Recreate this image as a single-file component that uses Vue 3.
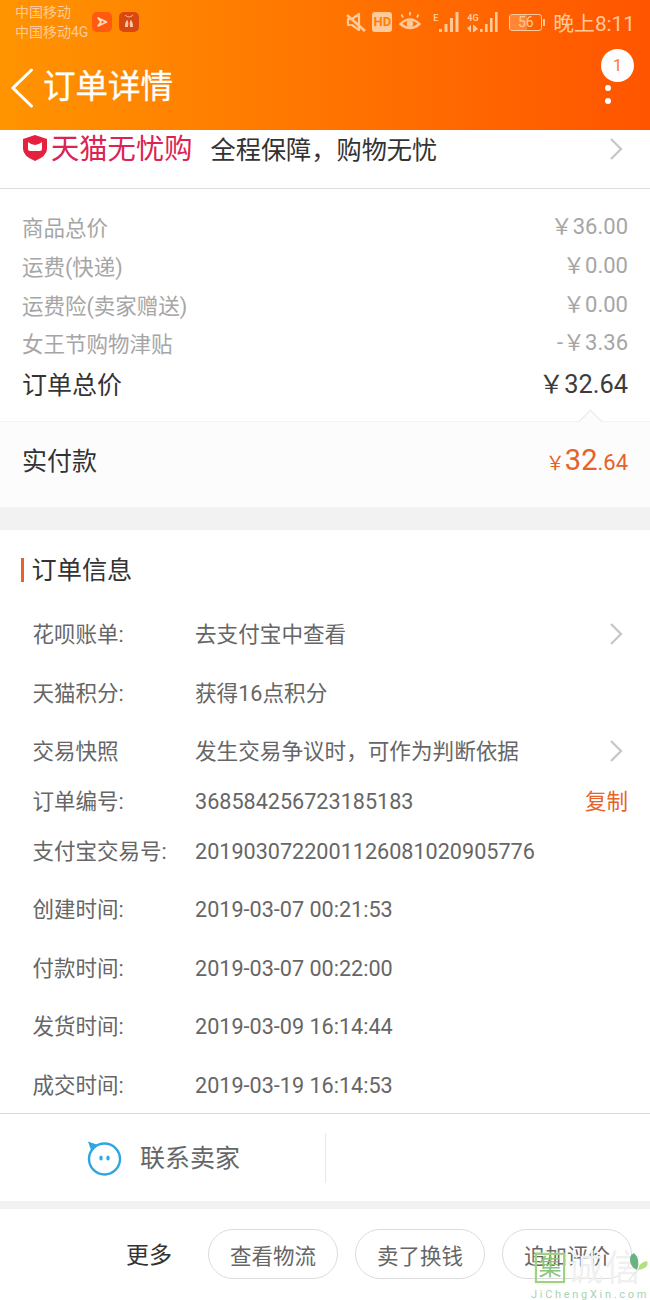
<template>
  <div class="page">
    <header class="top">
      <div class="status">
        <div class="carriers">
          <div>中国移动</div>
          <div>中国移动4G</div>
        </div>
        <span class="app-icon app-icon--play">
          <svg width="12" height="12" viewBox="0 0 12 12"><path d="M2 2 L10.5 6 L2 10 L5 6 Z" fill="none" stroke="#ffd9bd" stroke-width="1.6" stroke-linejoin="round" /></svg>
        </span>
        <span class="app-icon app-icon--tmall">
          <svg width="14" height="16" viewBox="0 0 14 16"><path d="M3 1 Q7 5 11 1" fill="none" stroke="#ffb48a" stroke-width="1" /><path d="M3 13 Q3 7 5.5 6 Q7 9 6 13 Z M11 13 Q11 7 8.5 6 Q7 9 8 13 Z" fill="#ffc9a8" /></svg>
        </span>
        <div class="status-right">
          <svg class="s-icon s-icon--mute" width="20" height="20" viewBox="0 0 20 20" fill="none" stroke="#ffc999" stroke-width="2.2">
            <path d="M2 7 H6 L13 2 V18 L6 13 H2 Z" stroke-linejoin="round" />
            <path d="M1 3 L19 19" stroke-width="2.6" />
          </svg>
          <span class="hd">HD</span>
          <svg class="s-icon s-icon--eye" width="22" height="20" viewBox="0 0 22 20" fill="none" stroke="#ffc999" stroke-width="2.3">
            <path d="M1.5 13 Q11 4 20.5 13 Q11 21 1.5 13 Z" />
            <circle cx="11" cy="12.8" r="3.2" fill="#ffc999" stroke="none" />
            <path d="M4 6.5 L2.5 3.5 M11 4.5 V1 M18 6.5 L19.5 3.5" stroke-width="1.8" />
          </svg>
          <div class="signal signal--e">
            <span class="signal__tag">E</span>
            <svg width="21" height="21" viewBox="0 0 21 21" fill="#ffc999">
              <rect x="0" y="17" width="3" height="3" /><rect x="5.5" y="12" width="3" height="8" /><rect x="11" y="6" width="3" height="14" /><rect x="16.5" y="0" width="3" height="20" />
            </svg>
          </div>
          <div class="signal signal--4g">
            <span class="signal__tag">4G</span>
            <svg width="32" height="21" viewBox="0 0 32 21" fill="#ffc999">
              <path d="M0 16 L4 13 V20 H3 Z M6 13 H7 L11 17 L7 20 H6 Z" />
              <rect x="13" y="17" width="2.6" height="3" /><rect x="18" y="12" width="2.6" height="8" /><rect x="23" y="6" width="2.6" height="14" /><rect x="28" y="0" width="2.6" height="20" />
            </svg>
          </div>
          <div class="battery"><span class="battery__body">56</span><span class="battery__cap" /></div>
          <span class="clock">晚上8:11</span>
        </div>
      </div>
      <div class="nav">
        <svg class="nav__back" width="23" height="40" viewBox="0 0 23 40" fill="none" stroke="#fff" stroke-width="3" stroke-linecap="round">
          <path d="M20.5 2 L2 20 L20.5 38" />
        </svg>
        <h1 class="nav__title">订单详情</h1>
        <div class="nav__more">
          <span class="nav__badge">1</span>
          <span class="nav__dot" />
          <span class="nav__dot" />
        </div>
      </div>
    </header>

    <section class="promise">
      <svg width="28" height="28" viewBox="0 0 28 28">
        <path d="M14 1 L26 5 V15 Q26 22 14 27 Q2 22 2 15 V5 Z" fill="#e5213f" />
        <path d="M7 8 H21 V15 Q21 17 19 17 H9 Q7 17 7 15 Z" fill="#fff" />
        <path d="M7 8 Q14 14 21 8 Z" fill="#e5213f" />
      </svg>
      <span class="promise__logo">天猫无忧购</span>
      <span class="promise__text">全程保障，购物无忧</span>
      <svg class="chevron chevron--promise" width="14" height="24" viewBox="0 0 14 24" fill="none" stroke="#c8c8c8" stroke-width="2.4"><path d="M2 2 L12 12 L2 22" /></svg>
    </section>

    <section class="prices">
      <div v-for="row in priceRows" :key="row.label" class="price-row">
        <span>{{ row.label }}</span>
        <span class="price-row__value">{{ row.value }}</span>
      </div>
      <div class="total-row">
        <span class="total-row__label">订单总价</span>
        <span class="total-row__value">￥32.64</span>
      </div>
    </section>

    <section class="paid">
      <span class="paid__notch" />
      <span class="paid__label">实付款</span>
      <span class="paid__value"><small class="paid__yen">￥</small><b>32</b><small>.64</small></span>
    </section>

    <section class="info">
      <h2 class="info__title">订单信息</h2>
      <div v-for="row in infoRows" :key="row.label" class="info-row" :style="{ height: row.h + 'px' }">
        <span class="info-row__label">{{ row.label }}</span>
        <span class="info-row__value">{{ row.value }}</span>
        <svg v-if="row.arrow" class="chevron" width="14" height="24" viewBox="0 0 14 24" fill="none" stroke="#c8c8c8" stroke-width="2.4"><path d="M2 2 L12 12 L2 22" /></svg>
        <span v-if="row.copy" class="info-row__copy">复制</span>
      </div>
    </section>

    <section class="contact">
      <div class="contact__seller">
        <svg width="36" height="36" viewBox="0 0 36 36" fill="none">
          <circle cx="18.5" cy="19" r="15.5" stroke="#2ea7e0" stroke-width="2.4" />
          <path d="M2 1.5 L12 5 L5 10 Z" fill="#2ea7e0" />
          <ellipse cx="15" cy="18" rx="1.7" ry="2.6" fill="#2ea7e0" />
          <ellipse cx="22" cy="18" rx="1.7" ry="2.6" fill="#2ea7e0" />
        </svg>
        <span class="contact__label">联系卖家</span>
      </div>
      <div class="contact__empty" />
    </section>

    <section class="actions">
      <span class="actions__more">更多</span>
      <button v-for="a in actions" :key="a" class="pill">{{ a }}</button>
    </section>

    <div class="mark">
      <span class="mark__box">集</span>
      <span class="mark__name">诚信</span>
      <svg class="mark__leaf" width="22" height="28" viewBox="0 0 22 28">
        <path d="M6 0 Q13 6 9 17 Q2 14 2 6 Q2 2 6 0 Z" fill="#4ea66a" opacity=".85" />
        <path d="M10 17 Q11 9 19 8 Q22 15 10 17 Z" fill="#a8df72" opacity=".9" />
        <path d="M1 27 Q5 22 10 17" stroke="#cfe6c4" fill="none" />
      </svg>
      <span class="mark__url">JiChengXin.com</span>
    </div>
  </div>
</template>

<script setup>
const priceRows = [
  { label: '商品总价', value: '￥36.00' },
  { label: '运费(快递)', value: '￥0.00' },
  { label: '运费险(卖家赠送)', value: '￥0.00' },
  { label: '女王节购物津贴', value: '-￥3.36' },
]

const infoRows = [
  { label: '花呗账单:', value: '去支付宝中查看', arrow: true, h: 58 },
  { label: '天猫积分:', value: '获得16点积分', h: 59 },
  { label: '交易快照', value: '发生交易争议时，可作为判断依据', arrow: true, h: 58 },
  { label: '订单编号:', value: '368584256723185183', copy: true, h: 42 },
  { label: '支付宝交易号:', value: '2019030722001126081020905776', h: 58 },
  { label: '创建时间:', value: '2019-03-07 00:21:53', h: 58 },
  { label: '付款时间:', value: '2019-03-07 00:22:00', h: 59 },
  { label: '发货时间:', value: '2019-03-09 16:14:44', h: 58 },
  { label: '成交时间:', value: '2019-03-19 16:14:53', h: 59 },
]

const actions = ['查看物流', '卖了换钱', '追加评价']
</script>

<style>
html, body { margin: 0; background: #fff; }
</style>

<style scoped>
.page {
  position: relative;
  width: 650px;
  height: 1300px;
  overflow: hidden;
  background: #fff;
  color: #333;
  font-family: Roboto, "Noto Sans CJK SC", sans-serif;
}

.top {
  height: 130px;
  background: linear-gradient(90deg, #ff9400, #ff5500);
}
.status {
  display: flex;
  align-items: center;
  height: 44px;
  padding: 0 15px;
  color: #ffc999;
}
.carriers { font-size: 14px; line-height: 20px; margin-right: 4px; white-space: nowrap; }
.app-icon {
  display: inline-flex;
  align-items: center;
  justify-content: center;
  width: 20px;
  height: 20px;
  border-radius: 5px;
  margin-right: 7px;
}
.app-icon--play { background: #ff5a10; }
.app-icon--tmall { background: #d9480f; }
.status-right { display: flex; align-items: center; margin-left: auto; }
.s-icon--mute { margin-right: 6px; }
.s-icon--eye { margin-right: 12px; margin-top: -2px; }
.hd {
  width: 20px;
  height: 20px;
  margin-right: 7px;
  border-radius: 3px;
  background: #ffc999;
  color: #ff8000;
  font-size: 13px;
  font-weight: 700;
  line-height: 20px;
  text-align: center;
}
.signal { position: relative; display: flex; align-items: center; }
.signal--e { padding-left: 6px; margin-right: 7px; }
.signal--4g { margin-right: 10px; }
.signal__tag { position: absolute; left: 0; top: 1px; font-size: 9px; font-weight: 700; line-height: 10px; }
.battery { display: flex; align-items: center; margin-right: 8px; }
.battery__body {
  width: 31px;
  height: 15px;
  border: 1px solid #ffc999;
  border-radius: 3px;
  font-size: 14px;
  line-height: 15px;
  text-align: center;
  background: linear-gradient(90deg, rgba(255,201,153,.35) 56%, transparent 56%);
}
.battery__cap { width: 2px; height: 7px; margin-left: 1px; background: #ffc999; }
.clock { font-size: 20.8px; white-space: nowrap; }

.nav {
  position: relative;
  display: flex;
  align-items: center;
  height: 86px;
  padding-left: 11px;
  box-sizing: border-box;
}
.nav__back { margin-right: 9px; margin-top: 1px; }
.nav__title { margin: 0; color: #fff; font-size: 32.5px; font-weight: 400; line-height: 1; -webkit-text-stroke: .3px #fff; }
.nav__more {
  position: absolute;
  left: 601px;
  top: 5px;
  display: flex;
  flex-direction: column;
  align-items: center;
  width: 33px;
}
.nav__badge {
  width: 33px;
  height: 33px;
  border-radius: 50%;
  background: #fff;
  color: #ff7a1a;
  font-size: 17px;
  line-height: 33px;
  text-align: center;
}
.nav__dot {
  position: relative;
  left: -10px;
  width: 6px;
  height: 6px;
  margin-top: 7px;
  border-radius: 50%;
  background: #fff;
}
.nav__badge + .nav__dot { margin-top: 3px; }

.promise {
  display: flex;
  align-items: flex-start;
  height: 59px;
  padding: 4px 27px 0 21px;
  box-sizing: border-box;
  border-bottom: 1px solid #ddd;
}
.promise__logo {
  margin-left: 2px;
  color: #dc2452;
  font-size: 28.3px;
  line-height: 32px;
  white-space: nowrap;
}
.promise__text { margin-left: 18px; color: #333; font-size: 25.2px; line-height: 33px; white-space: nowrap; }
.chevron { margin-left: auto; }
.chevron--promise { margin-top: 3px; }

.prices { height: 232px; padding: 21px 22px 0; box-sizing: border-box; }
.price-row {
  display: flex;
  justify-content: space-between;
  align-items: center;
  height: 38.7px;
  color: #a6a6a6;
  font-size: 21.5px;
  line-height: 28px;
}
.price-row__value { font-size: 22px; padding-bottom: 4px; }
.total-row {
  display: flex;
  justify-content: space-between;
  align-items: center;
  height: 42px;
  line-height: 32px;
}
.total-row__label { font-size: 25px; color: #333; }
.total-row__value { font-size: 25.4px; color: #3c3c3c; padding-bottom: 4px; }

.paid {
  position: relative;
  display: flex;
  justify-content: space-between;
  align-items: center;
  height: 86px;
  padding: 0 22px 6px;
  box-sizing: border-box;
  background: #fcfcfc;
  border-top: 1px solid #f3f3f3;
  line-height: 32px;
}
.paid__notch {
  position: absolute;
  left: 582px;
  top: -9px;
  width: 16px;
  height: 16px;
  background: #fcfcfc;
  border-top: 1px solid #e8e8e8;
  border-left: 1px solid #e8e8e8;
  transform: rotate(45deg);
}
.paid__label { font-size: 25px; color: #333; }
.paid__value { color: #e5622a; font-size: 23px; }
.paid__value small { font-size: 22px; }
.paid__value .paid__yen { font-size: 19px; }
.paid__value b { font-size: 29px; font-weight: 400; }

.info {
  margin-top: 23px;
  box-shadow: 0 -23px 0 #f2f2f2;
  height: 584px;
  box-sizing: border-box;
  border-bottom: 1px solid #d9d9d9;
}
.info__title {
  position: relative;
  margin: 0;
  height: 76px;
  padding-left: 31.5px;
  font-size: 25.2px;
  font-weight: 400;
  line-height: 82px;
  color: #333;
}
.info__title::before {
  content: "";
  position: absolute;
  left: 21px;
  top: 28px;
  width: 3px;
  height: 24px;
  background: #e5622a;
}
.info-row {
  display: flex;
  align-items: center;
  padding: 0 22px 0 32.5px;
  font-size: 21.5px;
  line-height: 30px;
  color: #666;
}
.info-row__label { width: 162.5px; flex: none; }
.info-row__value { font-size: 21.6px; color: #666; white-space: nowrap; }
.info-row__copy { margin-left: auto; color: #e5622a; font-size: 21.5px; }
.info-row .chevron { margin: 0 5px 3px auto; }

.contact {
  display: flex;
  height: 87px;
  align-items: center;
  box-shadow: 0 8px 0 #f2f2f2;
}
.contact__seller {
  display: flex;
  align-items: center;
  gap: 18px;
  width: 326px;
  height: 50px;
  padding-left: 86px;
  box-sizing: border-box;
  border-right: 1px solid #e8e8e8;
  color: #666;
  font-size: 25px;
}
.contact__label { padding-bottom: 3px; }

.actions {
  display: flex;
  align-items: center;
  margin-top: 8px;
  height: 91px;
  padding: 0 0 1px 126px;
  box-sizing: border-box;
}
.actions__more { flex: none; margin-right: 36px; padding-bottom: 2px; font-size: 23px; color: #333; white-space: nowrap; }
.pill {
  flex: none;
  width: 130px;
  height: 50px;
  margin-right: 17px;
  padding: 0;
  border: 1px solid #dcdcdc;
  border-radius: 25px;
  background: #fff;
  color: #666;
  font-family: inherit;
  font-size: 21.5px;
}

.mark {
  position: absolute;
  left: 530px;
  top: 1250px;
  width: 120px;
  height: 50px;
  pointer-events: none;
}
.mark__box {
  position: absolute;
  left: 5px;
  top: 3px;
  width: 30px;
  height: 30px;
  box-sizing: border-box;
  border: 2px solid #a0cf8a;
  box-shadow: 0 0 3px #d4f0a8;
  color: #8cc47c;
  font-size: 23px;
  line-height: 26px;
  text-align: center;
}
.mark__name {
  position: absolute;
  left: 37px;
  top: 0;
  color: #f0f0f0;
  font-size: 36px;
  line-height: 38px;
  letter-spacing: 2px;
  white-space: nowrap;
}
.mark__leaf { position: absolute; left: 98px; top: 3px; }
.mark__url {
  position: absolute;
  left: 1px;
  top: 38px;
  color: #a8d4b0;
  font-size: 11px;
  letter-spacing: 2.7px;
  white-space: nowrap;
}
</style>
